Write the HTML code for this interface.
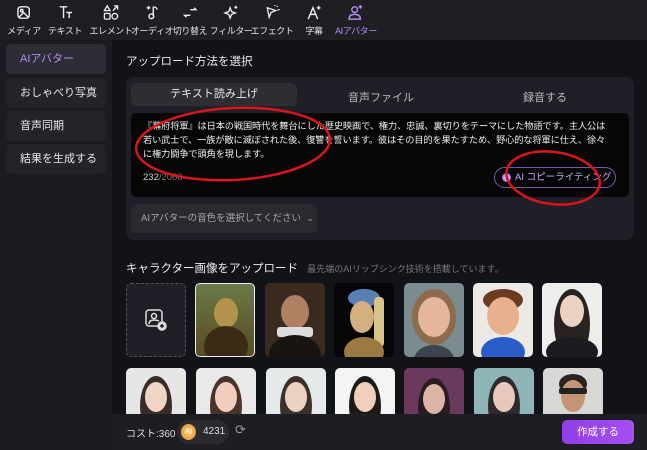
<!DOCTYPE html>
<html><head><meta charset="utf-8"><style>
*{margin:0;padding:0;box-sizing:border-box}
body{width:647px;height:450px;overflow:hidden;background:#121319;font-family:"Liberation Sans","Noto Sans CJK JP",sans-serif;color:#ddd;position:relative}
.a{position:absolute}
.top{left:0;top:0;width:647px;height:40px;background:#1e1e23}
.ti{position:absolute;top:0;text-align:center;font-size:9px;letter-spacing:-0.4px;color:#e6e6e6;white-space:nowrap;transform:translateX(-50%)}
.ti svg{display:block;margin:4px auto 3px;width:17px;height:17px}
.side{left:0;top:40px;width:112px;height:410px;background:#1b1b21}
.sb{position:absolute;left:6px;width:100px;height:30px;border-radius:5px;background:#23232a;font-size:11px;line-height:30px;padding-left:14px;color:#e8e8e8}
.tile{position:absolute;width:60px;height:74px;border-radius:5px;overflow:hidden}
.tile i{position:absolute;display:block;border-radius:50%}
</style></head><body>
<div class="a top"></div>
<div class="ti" style="left:24px"><svg viewBox="0 0 18 18" fill="none" stroke="#eee" stroke-width="1.5"><rect x="3" y="3" width="12" height="12" rx="3"/><circle cx="7" cy="7" r="1.3"/><path d="M4 14l5-5 5 5"/></svg>メディア</div>
<div class="ti" style="left:65px"><svg viewBox="0 0 18 18" fill="none" stroke="#eee" stroke-width="1.5"><path d="M3 3h8M7 3v12M10 9h6M13 9v6"/></svg>テキスト</div>
<div class="ti" style="left:111px"><svg viewBox="0 0 18 18" fill="none" stroke="#eee" stroke-width="1.4"><path d="M5 2l3 5H2z"/><path d="M11 7l5-5M12 2h4v4"/><rect x="2" y="10" width="6" height="6" rx="1"/><circle cx="13" cy="13" r="3"/></svg>エレメント</div>
<div class="ti" style="left:152px"><svg viewBox="0 0 18 18" fill="none" stroke="#eee" stroke-width="1.5"><path d="M10 3v10"/><circle cx="8" cy="13" r="2.5"/><path d="M10 3c2 0 4 1 4 3M3 4h4M5 2v4"/></svg>オーディオ</div>
<div class="ti" style="left:190px"><svg viewBox="0 0 18 18" fill="none" stroke="#eee" stroke-width="1.5"><path d="M9 6h6l-2-2M9 12H3l2 2"/></svg>切り替え</div>
<div class="ti" style="left:231px"><svg viewBox="0 0 18 18" fill="none" stroke="#eee" stroke-width="1.4"><path d="M8 4l1.5 4 4 1.5-4 1.5L8 15l-1.5-4L2.5 9.5l4-1.5z"/><path d="M14 2v3M12.5 3.5h3"/></svg>フィルター</div>
<div class="ti" style="left:272px"><svg viewBox="0 0 18 18" fill="none" stroke="#eee" stroke-width="1.4"><path d="M4 4l9 3-5 2-2 5z"/><path d="M14 3l1-1M15 6h2M12 1v1"/></svg>エフェクト</div>
<div class="ti" style="left:314px"><svg viewBox="0 0 18 18" fill="none" stroke="#eee" stroke-width="1.5"><path d="M3 16l5-12 5 12M5 11h6M14 2v4M12 4h4"/></svg>字幕</div>
<div class="ti" style="left:356px;color:#b78cf5"><svg viewBox="0 0 18 18" fill="none" stroke="#b78cf5" stroke-width="1.5"><circle cx="8" cy="6" r="3"/><path d="M2 16c0-4 3-5 6-5s6 1 6 5z"/><path d="M14 1v4M12 3h4"/></svg>AIアバター</div>

<div class="a side"></div>
<div class="sb" style="top:44px;background:#2d2d35;color:#b78cf5">AIアバター</div>
<div class="sb" style="top:78px">おしゃべり写真</div>
<div class="sb" style="top:111px">音声同期</div>
<div class="sb" style="top:144px">結果を生成する</div>

<div class="a" style="left:126px;top:53px;font-size:11.5px;color:#e8e8e8">アップロード方法を選択</div>
<div class="a" style="left:126px;top:77px;width:508px;height:163px;background:#1f1f27;border-radius:8px"></div>
<div class="a" style="left:131px;top:83px;width:166px;height:23px;background:#2d2d34;border-radius:5px;font-size:11px;text-align:center;line-height:23px;color:#eee">テキスト読み上げ</div>
<div class="a" style="left:348px;top:89px;font-size:11px;color:#bbb">音声ファイル</div>
<div class="a" style="left:523px;top:89px;font-size:11px;color:#bbb">録音する</div>
<div class="a" style="left:131px;top:113px;width:498px;height:84px;background:#060607;border-radius:5px"></div>
<div class="a" style="left:143px;top:119px;width:470px;font-size:9.2px;letter-spacing:-0.1px;line-height:14px;color:#f0f0f0">『幕府将軍』は日本の戦国時代を舞台にした歴史映画で、権力、忠誠、裏切りをテーマにした物語です。主人公は若い武士で、一族が敵に滅ぼされた後、復讐を誓います。彼はその目的を果たすため、野心的な将軍に仕え、徐々に権力闘争で頭角を現します。</div>
<div class="a" style="left:143px;top:172px;font-size:9.5px;color:#ccc">232<span style="color:#777">/2000</span></div>
<div class="a" style="left:494px;top:167px;width:122px;height:21px;border:1px solid #7b55b0;border-radius:11px;font-size:9.5px;line-height:19px;color:#c9a9f5;padding-left:20px;white-space:nowrap">AI コピーライティング</div>
<div class="a" style="left:502px;top:173px;width:9px;height:9px;border-radius:50%;background:radial-gradient(#e8d0ff,#8a4ae0)"></div>
<div class="a" style="left:131px;top:204px;width:186px;height:29px;background:#2a2a31;border-radius:5px;font-size:9.5px;line-height:29px;padding-left:10px;color:#aaa;white-space:nowrap">AIアバターの音色を選択してください&nbsp; <span style="font-size:9px">⌄</span></div>

<div class="a" style="left:126px;top:260px;font-size:11.5px;color:#eee;white-space:nowrap">キャラクター画像をアップロード <span style="font-size:9px;color:#777;margin-left:6px">最先端のAIリップシンク技術を搭載しています。</span></div>

<div class="a" style="left:126px;top:283px;width:60px;height:74px;border:1.5px dashed #555;border-radius:5px;background:#1f1f27"></div>
<svg class="a" style="left:144px;top:308px" width="24" height="24" viewBox="0 0 24 24" fill="none" stroke="#ddd" stroke-width="1.5"><rect x="2" y="2" width="16" height="16" rx="3"/><circle cx="10" cy="8" r="2.5"/><path d="M5 16c0-3 2-4 5-4s4 .5 5 1"/><circle cx="18" cy="18" r="4" fill="#ddd"/><path d="M18 16v4M16 18h4" stroke="#1f1f27"/></svg>

<div class="tile" style="left:195px;top:283px;background:linear-gradient(#6b7a48,#5a4a22);border:1.5px solid #eee"><i style="left:18px;top:14px;width:24px;height:30px;background:#b3924e"></i><i style="left:8px;top:42px;width:44px;height:40px;background:#3a2c14"></i></div>
<div class="tile" style="left:265px;top:283px;background:#3a2a20"><i style="left:16px;top:12px;width:28px;height:34px;background:#b08062"></i><i style="left:12px;top:44px;width:36px;height:10px;background:#ddd;border-radius:3px"></i><i style="left:4px;top:52px;width:52px;height:40px;background:#1a1410"></i></div>
<div class="tile" style="left:334px;top:283px;background:#07070a"><i style="left:14px;top:6px;width:32px;height:18px;background:#5a7fb5"></i><i style="left:16px;top:18px;width:24px;height:32px;background:#d4b080"></i><i style="left:40px;top:14px;width:10px;height:50px;background:#d8c48a;border-radius:4px"></i><i style="left:10px;top:54px;width:40px;height:30px;background:#9a7a40"></i></div>
<div class="tile" style="left:404px;top:283px;background:#7a8c90"><i style="left:8px;top:6px;width:44px;height:56px;background:#8c6c4c"></i><i style="left:14px;top:14px;width:32px;height:40px;background:#e6b69a"></i><i style="left:10px;top:62px;width:40px;height:30px;background:#3c4450"></i></div>
<div class="tile" style="left:473px;top:283px;background:#ece8e4"><i style="left:10px;top:6px;width:40px;height:22px;background:#6a3a22"></i><i style="left:14px;top:14px;width:32px;height:38px;background:#e8b08c"></i><i style="left:8px;top:54px;width:44px;height:30px;background:#2a5cc8"></i></div>
<div class="tile" style="left:542px;top:283px;background:#ededed"><i style="left:12px;top:6px;width:36px;height:70px;background:#2a2220"></i><i style="left:18px;top:12px;width:24px;height:32px;background:#ecd2c0"></i><i style="left:4px;top:54px;width:52px;height:30px;background:#1c1c20"></i></div>

<div class="tile" style="left:126px;top:368px;background:#e6e6e6"><i style="left:14px;top:8px;width:32px;height:60px;background:#3a2c28"></i><i style="left:19px;top:14px;width:22px;height:30px;background:#f0d4c6"></i></div>
<div class="tile" style="left:196px;top:368px;background:#eaeaea"><i style="left:14px;top:8px;width:32px;height:60px;background:#4a342a"></i><i style="left:19px;top:14px;width:22px;height:30px;background:#f0cdbd"></i></div>
<div class="tile" style="left:266px;top:368px;background:#e4e9ea"><i style="left:14px;top:8px;width:32px;height:60px;background:#3c3028"></i><i style="left:19px;top:14px;width:22px;height:30px;background:#ecd0c2"></i></div>
<div class="tile" style="left:335px;top:368px;background:#f4f4f4"><i style="left:14px;top:8px;width:32px;height:60px;background:#1e1a18"></i><i style="left:19px;top:14px;width:22px;height:30px;background:#f0d0bc"></i></div>
<div class="tile" style="left:404px;top:368px;background:#6a3a5e"><i style="left:14px;top:10px;width:32px;height:60px;background:#2a1c20"></i><i style="left:19px;top:16px;width:22px;height:30px;background:#dcb4a8"></i></div>
<div class="tile" style="left:474px;top:368px;background:#8fb4b8"><i style="left:14px;top:8px;width:32px;height:60px;background:#2c2a2a"></i><i style="left:19px;top:14px;width:22px;height:30px;background:#e8c8bc"></i></div>
<div class="tile" style="left:543px;top:368px;background:#d8d8d6"><i style="left:16px;top:6px;width:28px;height:20px;background:#2a2420"></i><i style="left:18px;top:12px;width:24px;height:32px;background:#c49474"></i><i style="left:16px;top:20px;width:28px;height:6px;background:#222;border-radius:2px"></i></div>

<div class="a" style="left:112px;top:414px;width:535px;height:36px;background:#1d1d24"></div>
<div class="a" style="left:126px;top:425px;font-size:10px;color:#ddd">コスト:360</div>
<div class="a" style="left:177px;top:420px;width:52px;height:24px;border-radius:12px;background:#2a2a31"></div>
<div class="a" style="left:181px;top:424px;width:15px;height:16px;border-radius:50%;background:radial-gradient(#ffd080,#e08a20);font-size:8px;color:#fff;text-align:center;line-height:16px">AI</div>
<div class="a" style="left:203px;top:426px;font-size:10px;color:#ddd">4231</div>
<div class="a" style="left:235px;top:422px;font-size:13px;color:#999">⟳</div>
<div class="a" style="left:562px;top:420px;width:72px;height:24px;border-radius:5px;background:linear-gradient(90deg,#8e3fe6,#a84ef0);font-size:10.5px;color:#fff;text-align:center;line-height:24px">作成する</div>

<svg class="a" style="left:0;top:0" width="647" height="450"><ellipse cx="233" cy="144" rx="97" ry="36" fill="none" stroke="#d8161c" stroke-width="2.5" transform="rotate(-3 233 144)"/><ellipse cx="553" cy="178" rx="47" ry="26" fill="none" stroke="#d8161c" stroke-width="2.5" transform="rotate(8 553 178)"/></svg>
</body></html>
